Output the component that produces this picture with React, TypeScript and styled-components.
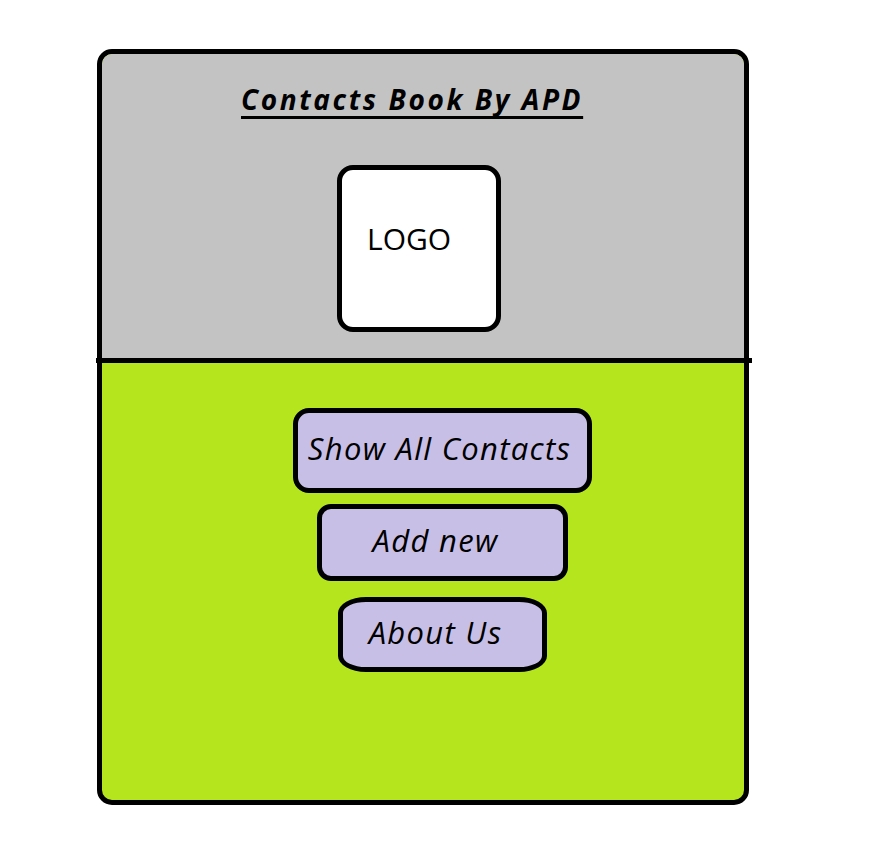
import React from "react";
import styled, { createGlobalStyle } from "styled-components";

const GlobalStyle = createGlobalStyle`
  html, body {
    margin: 0;
    padding: 0;
    background: #ffffff;
  }
  body {
    font-family: "Open Sans", "Liberation Sans", sans-serif;
    color: #000000;
  }
`;

const Page = styled.div`
  width: 878px;
  height: 858px;
  box-sizing: border-box;
  padding: 49px 0 0 97px;
`;

const Frame = styled.div`
  width: 652px;
  height: 756px;
  box-sizing: border-box;
  border: 5px solid #000;
  border-radius: 15px;
  display: flex;
  flex-direction: column;
  background: #b5e61d;
`;

const Header = styled.header`
  height: 304px;
  flex-shrink: 0;
  background: #c3c3c3;
  border-radius: 10px 10px 0 0;
  display: flex;
  flex-direction: column;
  align-items: flex-start;
`;

const Title = styled.h1`
  margin: 28px 0 0 139px;
  height: 34px;
  font-family: "Open Sans", "Liberation Sans", sans-serif;
  font-size: 28px;
  font-weight: 700;
  font-style: italic;
  line-height: 34px;
  letter-spacing: 2.6px;
  text-decoration: underline;
  text-decoration-thickness: 3px;
  text-underline-offset: 6px;
  text-decoration-skip-ink: none;
  white-space: nowrap;
`;

const LogoBox = styled.div`
  margin: 49px 0 0 235px;
  width: 164px;
  height: 167px;
  flex-shrink: 0;
  box-sizing: border-box;
  border: 5px solid #000;
  border-radius: 16px;
  background: #fff;
  display: flex;
  align-items: flex-start;
  padding: 49px 0 0 25px;
  font-family: "Open Sans", "Liberation Sans", sans-serif;
  font-size: 30px;
  line-height: 40px;
`;

const Divider = styled.div`
  height: 5px;
  flex-shrink: 0;
  background: #000;
  margin: 0 -8px 0 -6px;
`;

const Menu = styled.nav`
  flex: 1;
  display: flex;
  flex-direction: column;
  align-items: center;
  padding: 45px 0 0 39px;
  border-radius: 0 0 10px 10px;
`;

const MenuButton = styled.button<{ $w: number; $h: number; $gap: number; $shift: number; $radius: string }>`
  width: ${(p) => p.$w}px;
  height: ${(p) => p.$h}px;
  margin-top: ${(p) => p.$gap}px;
  flex-shrink: 0;
  box-sizing: border-box;
  border: 5px solid #000;
  border-radius: ${(p) => p.$radius};
  background: #c8bfe7;
  display: flex;
  align-items: center;
  justify-content: center;
  padding: 0 ${(p) => p.$shift}px 5px 0;
  font-family: "Open Sans", "Liberation Sans", sans-serif;
  font-style: italic;
  font-size: 31px;
  letter-spacing: 1.3px;
  color: #000;
  cursor: pointer;
  white-space: nowrap;
`;

export default function App() {
  return (
    <>
      <GlobalStyle />
      <Page>
        <Frame>
          <Header>
            <Title>Contacts Book By APD</Title>
            <LogoBox>LOGO</LogoBox>
          </Header>
          <Divider />
          <Menu>
            <MenuButton $w={299} $h={85} $gap={0} $shift={6} $radius="16px">
              Show All Contacts
            </MenuButton>
            <MenuButton $w={251} $h={77} $gap={11} $shift={14} $radius="14px">
              Add new
            </MenuButton>
            <MenuButton $w={209} $h={75} $gap={16} $shift={14} $radius="28px / 16px">
              About Us
            </MenuButton>
          </Menu>
        </Frame>
      </Page>
    </>
  );
}
